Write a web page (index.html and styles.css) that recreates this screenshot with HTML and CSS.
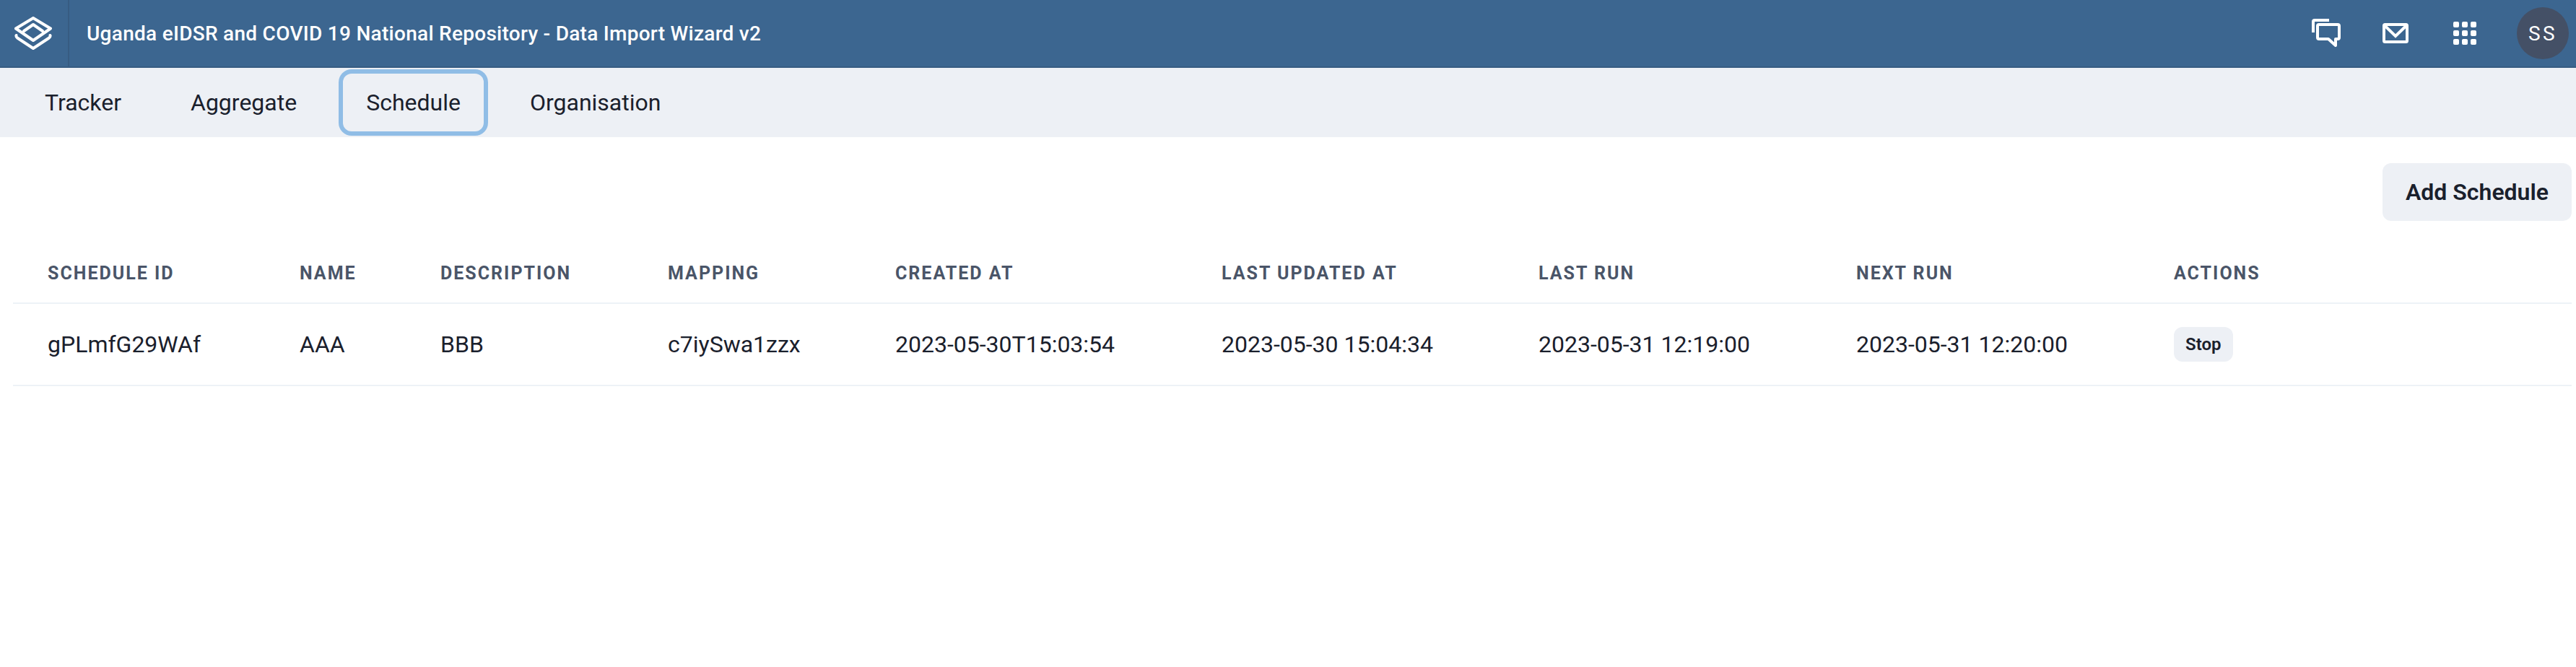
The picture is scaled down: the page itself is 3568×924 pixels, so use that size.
FILE: index.html
```html
<!DOCTYPE html>
<html>
<head>
	<meta charset="UTF-8">
	<title>Data Import Wizard - Schedule</title>
	<link rel="stylesheet" href="styles.css">
</head>
<body>
	<header class="topbar">
		<div class="topbar-logo">
			<svg class="logo-icon" width="52" height="46" viewBox="0 0 52 46" fill="none" stroke="#fff" stroke-width="4" stroke-linejoin="round" stroke-linecap="round">
				<path d="M26 2 L50 16.5 L26 33 L2 16.5 Z"/>
				<path d="M13 20 L26 11 L39 20"/>
				<path d="M2.5 26 Q2 28 4 29.5 L26 44 L48 29.5 Q50 28 49.5 26"/>
			</svg>
		</div>
		<div class="topbar-title">Uganda eIDSR and COVID 19 National Repository - Data Import Wizard v2</div>
		<div class="topbar-icon">
			<svg width="40" height="40" viewBox="0 0 40 40" fill="none" stroke="#fff" stroke-width="4" stroke-linejoin="round">
				<path d="M2 19 V4 Q2 2 4 2 H24" stroke-linejoin="miter"/>
				<path d="M10 8 H36 Q38 8 38 10 V26 Q38 28 36 28 H33 V37 L23 28 H10 Q8 28 8 26 V10 Q8 8 10 8 Z"/>
			</svg>
		</div>
		<div class="topbar-icon">
			<svg width="36" height="28" viewBox="0 0 36 28" fill="none" stroke="#fff" stroke-width="4">
				<rect x="2" y="2" width="32" height="24" rx="1.5"/>
				<path d="M3 3.5 L18 18 L33 3.5"/>
			</svg>
		</div>
		<div class="topbar-icon">
			<svg width="32" height="32" viewBox="0 0 32 32" fill="#fff">
				<rect x="0" y="0" width="8" height="8" rx="2"/>
				<rect x="12" y="0" width="8" height="8" rx="2"/>
				<rect x="24" y="0" width="8" height="8" rx="2"/>
				<rect x="0" y="12" width="8" height="8" rx="2"/>
				<rect x="12" y="12" width="8" height="8" rx="2"/>
				<rect x="24" y="12" width="8" height="8" rx="2"/>
				<rect x="0" y="24" width="8" height="8" rx="2"/>
				<rect x="12" y="24" width="8" height="8" rx="2"/>
				<rect x="24" y="24" width="8" height="8" rx="2"/>
			</svg>
		</div>
		<div class="avatar">SS</div>
	</header>

	<nav class="tabs">
		<div class="tab">Tracker</div>
		<div class="tab">Aggregate</div>
		<div class="tab tab-focus">Schedule</div>
		<div class="tab">Organisation</div>
	</nav>

	<main class="content">
		<div class="toolbar">
			<button class="btn-add">Add Schedule</button>
		</div>
		<table class="schedules">
			<colgroup>
				<col class="col-id">
				<col class="col-name">
				<col class="col-desc">
				<col class="col-mapping">
				<col class="col-created">
				<col class="col-updated">
				<col class="col-last">
				<col class="col-next">
				<col class="col-actions">
			</colgroup>
			<thead>
				<tr>
					<th>Schedule Id</th>
					<th>Name</th>
					<th>Description</th>
					<th>Mapping</th>
					<th>Created At</th>
					<th>Last Updated At</th>
					<th>Last Run</th>
					<th>Next Run</th>
					<th>Actions</th>
				</tr>
			</thead>
			<tbody>
				<tr>
					<td>gPLmfG29WAf</td>
					<td>AAA</td>
					<td>BBB</td>
					<td>c7iySwa1zzx</td>
					<td>2023-05-30T15:03:54</td>
					<td>2023-05-30 15:04:34</td>
					<td>2023-05-31 12:19:00</td>
					<td>2023-05-31 12:20:00</td>
					<td><button class="btn-stop">Stop</button></td>
				</tr>
			</tbody>
		</table>
	</main>
</body>
</html>
```

FILE: styles.css
```css
* {
	box-sizing: border-box;
}
body {
	margin: 0;
	background: #fff;
	color: #1a202c;
	font-family: Roboto, sans-serif;
}
.topbar {
	display: flex;
	align-items: center;
	height: 94px;
	background: #3c6690;
	border-bottom: 2px solid #375c82;
	color: #fff;
}
.topbar-logo {
	display: flex;
	align-items: center;
	align-self: stretch;
	width: 96px;
	padding-left: 20px;
	border-right: 2px solid #375c82;
}
.topbar-title {
	flex: 1;
	padding-left: 24px;
	font-size: 28px;
	font-weight: 500;
	letter-spacing: .28px;
}
.topbar-icon {
	display: flex;
	align-items: center;
	justify-content: center;
	width: 96px;
}
.avatar {
	display: flex;
	align-items: center;
	justify-content: center;
	width: 72px;
	height: 72px;
	margin: 0 10px 0 24px;
	border-radius: 50%;
	background: #445066;
	font-size: 28px;
	letter-spacing: 3.5px;
}
.tabs {
	display: flex;
	gap: 32px;
	height: 96px;
	padding: 8px 0 8px 30px;
	background: #edf0f5;
}
.tab {
	display: flex;
	align-items: center;
	padding: 0 32px;
	border-radius: 12px;
	font-size: 32px;
}
.tab-focus {
	box-shadow: 0 0 0 6px #90bde6;
}
.content {
	padding: 36px 6px 0 18px;
}
.toolbar {
	display: flex;
	justify-content: flex-end;
	margin-bottom: 33px;
}
.btn-add {
	height: 80px;
	padding: 0 32px;
	border: 0;
	border-radius: 12px;
	background: #edf0f5;
	color: #1a202c;
	font-family: inherit;
	font-size: 32px;
	font-weight: 600;
}
.schedules {
	width: 100%;
	table-layout: fixed;
	border-collapse: collapse;
}
.col-id { width: 349px; }
.col-name { width: 195px; }
.col-desc { width: 315px; }
.col-mapping { width: 315px; }
.col-created { width: 452px; }
.col-updated { width: 439px; }
.col-last { width: 440px; }
.col-next { width: 440px; }
.col-actions { width: 599px; }
th {
	padding: 24px 48px;
	border-bottom: 2px solid #edf2f7;
	color: #4a5568;
	font-size: 25px;
	line-height: 32px;
	font-weight: 700;
	letter-spacing: 2px;
	text-align: left;
	text-transform: uppercase;
}
td {
	padding: 32px 48px;
	border-bottom: 2px solid #edf2f7;
	font-size: 32px;
	line-height: 48px;
	white-space: nowrap;
}
.btn-stop {
	display: block;
	height: 48px;
	padding: 0 16px;
	border: 0;
	border-radius: 12px;
	background: #edf0f5;
	color: #1a202c;
	font-family: inherit;
	font-size: 24px;
	font-weight: 600;
}
```
